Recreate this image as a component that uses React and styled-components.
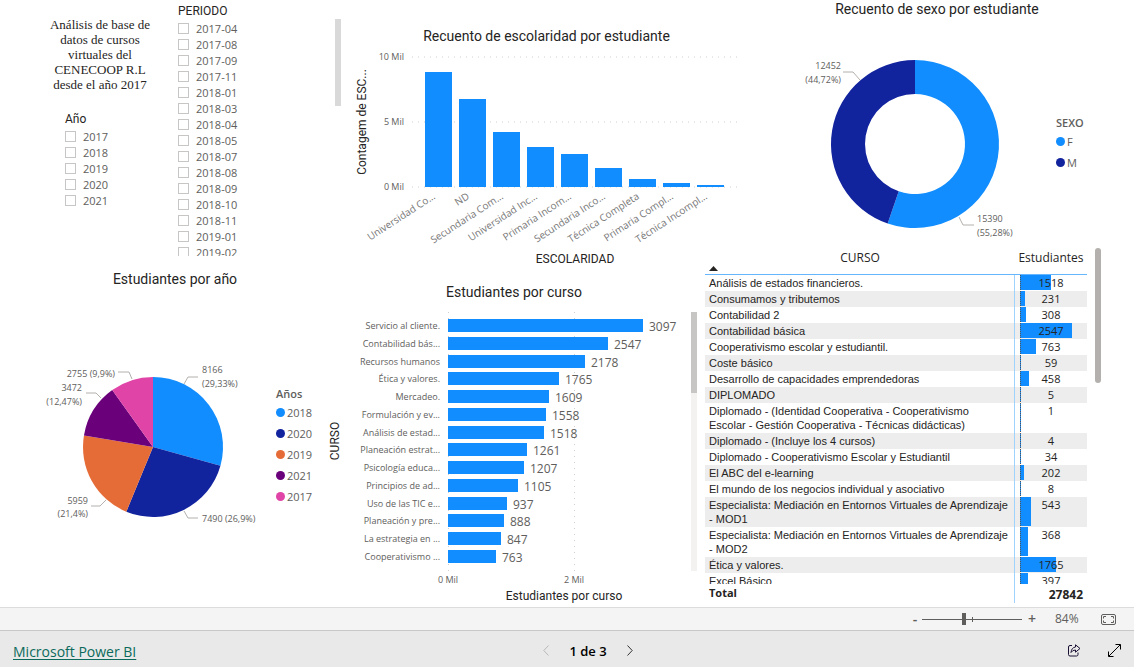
import React, { useState } from 'react'
import styled, { createGlobalStyle } from 'styled-components'

const sans = '"Open Sans", "Noto Sans", sans-serif'
const din = 'Roboto, "Open Sans", sans-serif'

const colors = {
  blue: '#118dff',
  navy: '#12239e',
  orange: '#e66c37',
  purple: '#6b007b',
  pink: '#e044a7',
  text: '#252423',
  muted: '#605e5c'
}

const GlobalStyle = createGlobalStyle`
  * {
    box-sizing: border-box;
  }
  body {
    margin: 0;
    background: #fff;
    color: ${colors.text};
    font-family: ${sans};
    font-size: 11px;
  }
`

const Page = styled.div`
  display: flex;
  flex-direction: column;
  height: 100vh;
`

const Report = styled.main`
  flex: 1;
  min-height: 0;
  display: grid;
  grid-template-columns:
    minmax(0, 325fr) minmax(0, 20fr) minmax(0, 358fr) minmax(0, 37fr)
    minmax(0, 394fr);
  grid-template-rows: minmax(0, 248fr) minmax(0, 20fr) minmax(0, 339fr);
`

const Visual = styled.section`
  grid-column: ${props => props.$col};
  grid-row: ${props => props.$row};
  display: flex;
  flex-direction: column;
  min-height: 0;
  padding: ${props => props.$pad || 0};
`

const VisualTitle = styled.h2`
  margin: 0;
  padding-left: ${props => props.$indent || 0};
  font: 400 14px/18px ${din};
  text-align: center;
`

const ChartRow = styled.div`
  flex: 1;
  min-height: 0;
  display: flex;
  align-items: ${props => props.$align || 'center'};
  gap: ${props => props.$gap};
  padding: ${props => props.$pad};
`

/* filters */

const Filters = styled.section`
  grid-column: 1 / 3;
  grid-row: 1 / 3;
  display: flex;
  min-height: 0;
  padding-bottom: 12px;
`

const Intro = styled.div`
  flex: 0 0 178px;
  padding: 17px 22px 0 44px;
`

const IntroTitle = styled.h1`
  margin: 0 0 19px;
  font: 400 13px/15px "Liberation Serif", serif;
  text-align: center;
  white-space: nowrap;
`

const SlicerBox = styled.div`
  display: flex;
  flex-direction: column;
  flex: 1;
  min-height: 0;
  padding: ${props => props.$pad};
`

const SlicerTitle = styled.h3`
  margin: 0 0 1px;
  font: 400 12px/16px ${din};
`

const SlicerList = styled.ul`
  flex: 1;
  min-height: 0;
  margin: 0;
  padding: 0;
  list-style: none;
  overflow: hidden;
`

const SlicerLabel = styled.label`
  display: flex;
  align-items: center;
  gap: 7px;
  height: 16px;
  color: ${colors.muted};
`

const Tick = styled.input`
  appearance: none;
  width: 11px;
  height: 11px;
  margin: 0;
  border: 1px solid #c8c6c4;
  background: #fff;

  &:checked {
    background: ${colors.muted};
  }
`

const ScrollTrack = styled.div`
  flex: none;
  width: 6px;
  height: ${props => props.$height};
  margin: ${props => props.$margin};
  background: ${props => props.$track || 'transparent'};
`

const ScrollThumb = styled.div`
  height: ${props => props.$height};
  border-radius: ${props => props.$radius || 0};
  background: ${props => props.$color};
`

/* charts */

const Chart = styled.svg`
  display: block;
  flex: none;
  overflow: visible;
  font-family: ${sans};
`

const AxisText = styled.text`
  font-size: ${props => props.$size || '10px'};
  fill: ${props => props.$fill || colors.muted};
`

const AxisTitle = styled.text`
  font: 400 12px ${din};
  fill: ${colors.text};
  text-anchor: middle;
`

const GridLine = styled.line`
  stroke: #d2d0ce;
  stroke-dasharray: 1 5;
`

const Leader = styled.polyline`
  fill: none;
  stroke: #b3b0ad;
`

const LegendList = styled.ul`
  margin: 0;
  padding: 0;
  list-style: none;
  color: ${colors.muted};
`

const LegendTitle = styled.li`
  font-weight: 600;
  line-height: 16px;
`

const LegendItem = styled.li`
  display: flex;
  align-items: center;
  gap: 2px;
  height: 21px;

  &::before {
    content: '';
    width: 9px;
    height: 9px;
    border-radius: 50%;
    background: ${props => props.$color};
  }
`

/* table */

const TableVisual = styled.section`
  grid-column: 4 / 6;
  grid-row: 2 / 4;
  display: flex;
  gap: 8px;
  min-height: 0;
  padding: 0 33px 4px 2px;
`

const TableArea = styled.div`
  flex: 1;
  min-width: 0;
  display: flex;
  flex-direction: column;
`

const TableScroll = styled.div`
  flex: 1;
  min-height: 0;
  overflow: hidden;
`

const CourseTable = styled.table`
  width: 100%;
  table-layout: fixed;
  border-spacing: 0;
  font-family: "Liberation Sans", sans-serif;
  line-height: 14px;

  tbody tr:nth-child(even) {
    background: #ededed;
  }
`

const HeadCell = styled.th`
  position: sticky;
  top: 0;
  z-index: 1;
  width: ${props => props.$width};
  height: 27px;
  padding: 3px 4px 0;
  border-bottom: 1px solid #66b5ff;
  background: #fff;
  font: 400 12px/14px ${sans};
  vertical-align: top;

  & + & {
    padding: 3px 0 0;
  }
`

const SortMark = styled.svg`
  display: block;
  margin-top: 1px;
`

const NameCell = styled.td`
  padding: 1px 4px;
  border-right: 1px solid #a0d1ff;
  white-space: pre-line;
`

const ValueCell = styled.td`
  position: relative;
  padding: 1px 0;
  font-family: ${sans};
  text-align: center;
  vertical-align: top;
`

const DataBar = styled.span`
  position: absolute;
  top: 0;
  bottom: 1px;
  left: 5px;
  border-left: 1px dotted #555;
  background: ${colors.blue};
`

const Value = styled.span`
  position: relative;
`

const TotalRow = styled.tr`
  height: 19px;
  font: 700 12px/15px ${sans};
`

const TotalLabel = styled.th`
  padding: 0 4px 3px;
  border-right: 1px solid #a0d1ff;
  font-size: 11px;
  text-align: left;
`

const TotalValue = styled.td`
  width: 72px;
  padding: 1px 4px 0;
  text-align: right;
`

/* bottom bars */

const ZoomBar = styled.div`
  flex: none;
  display: flex;
  align-items: center;
  justify-content: flex-end;
  height: 24px;
  padding-right: 18px;
  border-top: 1px solid #dcdcdc;
  border-bottom: 1px solid #c8c8c8;
  background: #f4f4f4;
  color: ${colors.muted};
`

const IconButton = styled.button`
  display: flex;
  align-items: center;
  justify-content: center;
  width: ${props => props.$width || '14px'};
  height: 20px;
  padding: 0;
  border: 0;
  background: none;
  color: ${props => props.$color || colors.muted};
  font: 600 14px/20px ${sans};
`

const SliderWrap = styled.div`
  position: relative;
  display: flex;
  margin-right: 3px;

  &::after {
    content: '';
    position: absolute;
    top: 4px;
    left: 50px;
    width: 1px;
    height: 5px;
    background: ${colors.muted};
  }
`

const Slider = styled.input`
  appearance: none;
  width: 100px;
  height: 12px;
  margin: 0;
  background: linear-gradient(${colors.muted}, ${colors.muted}) center / 100% 1px
    no-repeat;

  &::-webkit-slider-thumb {
    appearance: none;
    width: 4px;
    height: 12px;
    background: ${colors.muted};
  }
`

const ZoomValue = styled.output`
  width: 24px;
  margin: 0 22px 0 16px;
  font-size: 12px;
  line-height: 16px;
`

const Footer = styled.footer`
  flex: none;
  display: grid;
  grid-template-columns: 539fr 98px 497fr;
  align-items: center;
  height: 36px;
  background: #e9e9e9;
`

const BrandLink = styled.a`
  justify-self: start;
  margin-left: 13px;
  padding-top: 4px;
  color: #0b6a5b;
  font-size: 14px;
  text-decoration: underline;
  text-underline-offset: 2px;
`

const Pager = styled.nav`
  display: flex;
  align-items: center;
  justify-content: space-between;
  padding-top: 3px;
  color: #000;
  font: 600 13px/20px ${sans};
`

const Actions = styled.div`
  display: flex;
  justify-content: flex-end;
  gap: 26px;
  padding: 3px 13px 0 0;
`

const years = ['2017', '2018', '2019', '2020', '2021']

const periods = [
  '2017-04', '2017-08', '2017-09', '2017-11', '2018-01',
  '2018-03', '2018-04', '2018-05', '2018-07', '2018-08',
  '2018-09', '2018-10', '2018-11', '2019-01', '2019-02'
]

const schooling = [
  ['Universidad Co...', 8880],
  ['ND', 6770],
  ['Secundaria Com...', 4200],
  ['Universidad Inc...', 3080],
  ['Primaria Incom...', 2520],
  ['Secundaria Inco...', 1450],
  ['Técnica Completa', 640],
  ['Primaria Compl...', 330],
  ['Técnica Incompl...', 180]
]

const courseBars = [
  ['Servicio al cliente.', 3097],
  ['Contabilidad bás...', 2547],
  ['Recursos humanos', 2178],
  ['Ética y valores.', 1765],
  ['Mercadeo.', 1609],
  ['Formulación y ev...', 1558],
  ['Análisis de estad...', 1518],
  ['Planeación estrat...', 1261],
  ['Psicología educa...', 1207],
  ['Principios de ad...', 1105],
  ['Uso de las TIC e...', 937],
  ['Planeación y pre...', 888],
  ['La estrategia en ...', 847],
  ['Cooperativismo ...', 763]
]

const courseRows = [
  ['Análisis de estados financieros.', 1518],
  ['Consumamos y tributemos', 231],
  ['Contabilidad 2', 308],
  ['Contabilidad básica', 2547],
  ['Cooperativismo escolar y estudiantil.', 763],
  ['Coste básico', 59],
  ['Desarrollo de capacidades emprendedoras', 458],
  ['DIPLOMADO', 5],
  ['Diplomado - (Identidad Cooperativa - Cooperativismo\nEscolar - Gestión Cooperativa - Técnicas didácticas)', 1],
  ['Diplomado - (Incluye los 4 cursos)', 4],
  ['Diplomado - Cooperativismo Escolar y Estudiantil', 34],
  ['El ABC del e-learning', 202],
  ['El mundo de los negocios individual y asociativo', 8],
  ['Especialista: Mediación en Entornos Virtuales de Aprendizaje\n- MOD1', 543],
  ['Especialista: Mediación en Entornos Virtuales de Aprendizaje\n- MOD2', 368],
  ['Ética y valores.', 1765],
  ['Excel Básico', 397]
]

const sexSlices = [
  { name: 'F', value: 15390, color: colors.blue },
  { name: 'M', value: 12452, color: colors.navy }
]

const yearSlices = [
  { name: '2018', value: 8166, color: colors.blue },
  { name: '2020', value: 7490, color: colors.navy },
  { name: '2019', value: 5959, color: colors.orange },
  { name: '2021', value: 3472, color: colors.purple },
  { name: '2017', value: 2755, color: colors.pink }
]

const point = (angle, r) =>
  `${(Math.sin(angle) * r).toFixed(2)} ${(-Math.cos(angle) * r).toFixed(2)}`

const Slices = ({ data, outer, inner = 0 }) => {
  const total = data.reduce((sum, d) => sum + d.value, 0)
  let start = 0
  return data.map(d => {
    const end = start + (d.value / total) * Math.PI * 2
    const large = end - start > Math.PI ? 1 : 0
    const path = [
      `M${point(start, outer)}`,
      `A${outer} ${outer} 0 ${large} 1 ${point(end, outer)}`,
      `L${point(end, inner)}`,
      inner ? `A${inner} ${inner} 0 ${large} 0 ${point(start, inner)}` : '',
      'Z'
    ].join('')
    start = end
    return <path key={d.name} d={path} fill={d.color} />
  })
}

const Legend = ({ title, data }) => (
  <LegendList>
    <LegendTitle>{title}</LegendTitle>
    {data.map(d => (
      <LegendItem key={d.name} $color={d.color}>{d.name}</LegendItem>
    ))}
  </LegendList>
)

const Slicer = ({ title, items, pad }) => (
  <SlicerBox $pad={pad}>
    <SlicerTitle>{title}</SlicerTitle>
    <SlicerList>
      {items.map(item => (
        <li key={item}>
          <SlicerLabel>
            <Tick type='checkbox' name={title} value={item} />
            {item}
          </SlicerLabel>
        </li>
      ))}
    </SlicerList>
  </SlicerBox>
)

const SchoolingChart = () => (
  <Chart width='395' height='223' viewBox='0 0 395 223'>
    {['10 Mil', '5 Mil', '0 Mil'].map((tick, i) => (
      <g key={tick}>
        <AxisText x='59' y={15 + i * 65} textAnchor='end' $size='9px'>{tick}</AxisText>
        <GridLine x1='67' x2='394' y1={12 + i * 65} y2={12 + i * 65} />
      </g>
    ))}
    {schooling.map(([name, value], i) => {
      const x = 80 + i * 34
      const height = Math.round(value * 0.013)
      return (
        <g key={name}>
          <rect x={x} y={142 - height} width='27' height={height} fill={colors.blue} />
          <AxisText
            $fill='#777'
            textAnchor='end'
            transform={`translate(${x + 11} 153) rotate(-33)`}
          >
            {name}
          </AxisText>
        </g>
      )
    })}
    <AxisTitle transform='translate(21 77) rotate(-90)'>Contagem de ESC...</AxisTitle>
    <AxisTitle x='230' y='218'>ESCOLARIDAD</AxisTitle>
  </Chart>
)

const CourseChart = () => (
  <Chart width='366' height='305' viewBox='0 0 366 305'>
    {[0, 2].map(n => (
      <g key={n}>
        <GridLine x1={123.5 + n * 63} x2={123.5 + n * 63} y1='10' y2='269' />
        <AxisText x={123 + n * 63} y='281' textAnchor='middle' $size='9px'>{n} Mil</AxisText>
      </g>
    ))}
    {courseBars.map(([name, value], i) => {
      const y = 17 + Math.round(i * 17.75)
      const width = Math.round(value * 0.063)
      return (
        <g key={name}>
          <AxisText x='115' y={y + 10} textAnchor='end' $size='9px'>{name}</AxisText>
          <rect x='123' y={y} width={width} height='13' fill={colors.blue} />
          <AxisText x={129 + width} y={y + 12} $size='12px'>{value}</AxisText>
        </g>
      )
    })}
    <AxisTitle transform='translate(14 139) rotate(-90)'>CURSO</AxisTitle>
    <AxisTitle x='239' y='298'>Estudiantes por curso</AxisTitle>
  </Chart>
)

const SexChart = () => (
  <Chart width='225' height='200' viewBox='-117 -100 225 200'>
    <Slices data={sexSlices} outer={84} inner={50} />
    <Leader points='-72,-72 -62,-72 -55,-64' />
    <Leader points='44,73 48,81 59,81' />
    <AxisText x='-74' y='-75' textAnchor='end' $size='9px'>12452</AxisText>
    <AxisText x='-74' y='-61' textAnchor='end' $size='9px'>(44,72%)</AxisText>
    <AxisText x='62' y='78' $size='9px'>15390</AxisText>
    <AxisText x='62' y='92' $size='9px'>(55,28%)</AxisText>
  </Chart>
)

const YearChart = () => (
  <Chart width='226' height='180' viewBox='-116 -90 226 180'>
    <Slices data={yearSlices} outer={70} />
    <Leader points='31,-63 35,-70 45,-70' />
    <Leader points='31,64 35,71 45,71' />
    <Leader points='-62,59 -53,59 -47,53' />
    <Leader points='-67,-54 -57,-54 -52,-49' />
    <Leader points='-35,-75 -24,-75 -21,-68' />
    <AxisText x='49' y='-74' $size='9px'>8166</AxisText>
    <AxisText x='49' y='-60' $size='9px'>(29,33%)</AxisText>
    <AxisText x='49' y='75' $size='9px'>7490 (26,9%)</AxisText>
    <AxisText x='-65' y='57' textAnchor='end' $size='9px'>5959</AxisText>
    <AxisText x='-65' y='70' textAnchor='end' $size='9px'>(21,4%)</AxisText>
    <AxisText x='-71' y='-56' textAnchor='end' $size='9px'>3472</AxisText>
    <AxisText x='-71' y='-42' textAnchor='end' $size='9px'>(12,47%)</AxisText>
    <AxisText x='-38' y='-70' textAnchor='end' $size='9px'>2755 (9,9%)</AxisText>
  </Chart>
)

const CoursesTable = () => (
  <TableVisual>
    <TableArea>
      <TableScroll>
        <CourseTable>
          <thead>
            <tr>
              <HeadCell scope='col' aria-sort='ascending'>
                CURSO
                <SortMark width='9' height='5' viewBox='0 0 9 5'>
                  <path d='M0 5L4.500 0L9 5Z' fill={colors.text} />
                </SortMark>
              </HeadCell>
              <HeadCell scope='col' $width='72px'>Estudiantes</HeadCell>
            </tr>
          </thead>
          <tbody>
            {courseRows.map(([name, value]) => (
              <tr key={name}>
                <NameCell>{name}</NameCell>
                <ValueCell>
                  <DataBar style={{ width: Math.max(1, Math.round(value * 0.0205)) }} />
                  <Value>{value}</Value>
                </ValueCell>
              </tr>
            ))}
          </tbody>
        </CourseTable>
      </TableScroll>
      <CourseTable>
        <tfoot>
          <TotalRow>
            <TotalLabel scope='row'>Total</TotalLabel>
            <TotalValue>27842</TotalValue>
          </TotalRow>
        </tfoot>
      </CourseTable>
    </TableArea>
    <ScrollTrack $height='100%'>
      <ScrollThumb $height='38%' $radius='3px' $color='#b3b0ad' />
    </ScrollTrack>
  </TableVisual>
)

const ZoomControls = () => {
  const [zoom, setZoom] = useState(84)
  return (
    <ZoomBar>
      <IconButton aria-label='Alejar' onClick={() => setZoom(zoom - 10)}>-</IconButton>
      <SliderWrap>
        <Slider
          type='range'
          aria-label='Zoom'
          min='0'
          max='200'
          value={zoom}
          onChange={e => setZoom(Number(e.target.value))}
        />
      </SliderWrap>
      <IconButton aria-label='Acercar' onClick={() => setZoom(zoom + 10)}>+</IconButton>
      <ZoomValue>{zoom}%</ZoomValue>
      <IconButton $width='15px' aria-label='Ajustar a la página'>
        <svg width='15' height='11' viewBox='0 0 15 11' fill='none' stroke='currentColor'>
          <rect x='0.5' y='0.5' width='14' height='10' rx='1.5' />
          <path d='M5 2.500H2.500V4.500M2.500 6.500V8.500H5M10 2.500H12.500V4.500M12.500 6.500V8.500H10' />
        </svg>
      </IconButton>
    </ZoomBar>
  )
}

export default () => (
  <Page>
    <GlobalStyle />
    <Report>
      <Filters>
        <Intro>
          <IntroTitle>
            Análisis de base de<br />
            datos de cursos<br />
            virtuales del<br />
            CENECOOP R.L<br />
            desde el año 2017
          </IntroTitle>
          <Slicer title='Año' items={years} pad='0 0 0 21px' />
        </Intro>
        <Slicer title='PERIODO' items={periods} pad='3px 0 0' />
        <ScrollTrack $height='235px' $margin='19px 4px 0 0'>
          <ScrollThumb $height='87px' $color='#d9d9d9' />
        </ScrollTrack>
      </Filters>
      <Visual $col='3 / 5' $row='1 / 3' $pad='27px 0 0'>
        <VisualTitle $indent='8px'>Recuento de escolaridad por estudiante</VisualTitle>
        <SchoolingChart />
      </Visual>
      <Visual $col='5' $row='1'>
        <VisualTitle>Recuento de sexo por estudiante</VisualTitle>
        <ChartRow $gap='33px' $pad='21px 0 0 58px'>
          <SexChart />
          <Legend title='SEXO' data={sexSlices} />
        </ChartRow>
      </Visual>
      <Visual $col='1' $row='3' $pad='2px 0 0'>
        <VisualTitle $indent='25px'>Estudiantes por año</VisualTitle>
        <ChartRow $gap='13px' $pad='0 0 2px 37px'>
          <YearChart />
          <Legend title='Años' data={yearSlices} />
        </ChartRow>
      </Visual>
      <Visual $col='2 / 4' $row='3' $pad='15px 0 0'>
        <VisualTitle>Estudiantes por curso</VisualTitle>
        <ChartRow $align='flex-start' $pad='1px 0 0'>
          <CourseChart />
          <ScrollTrack $height='259px' $margin='10px 0 0' $track='#f3f2f1'>
            <ScrollThumb $height='81px' $color='#c8c6c4' />
          </ScrollTrack>
        </ChartRow>
      </Visual>
      <CoursesTable />
    </Report>
    <ZoomControls />
    <Footer>
      <BrandLink href='#powerbi'>Microsoft Power BI</BrandLink>
      <Pager aria-label='Páginas'>
        <IconButton $color='#b8b8b8' aria-label='Página anterior' disabled>
          <svg width='6' height='11' viewBox='0 0 6 11' fill='none' stroke='currentColor'>
            <path d='M5.500 0.500L0.800 5.500L5.500 10.500' />
          </svg>
        </IconButton>
        <span>1 de 3</span>
        <IconButton $color='#333' aria-label='Página siguiente'>
          <svg width='6' height='11' viewBox='0 0 6 11' fill='none' stroke='currentColor'>
            <path d='M0.500 0.500L5.200 5.500L0.500 10.500' />
          </svg>
        </IconButton>
      </Pager>
      <Actions>
        <IconButton $color='#1b1033' aria-label='Compartir'>
          <svg width='14' height='13' viewBox='0 0 14 13' fill='none' stroke='currentColor'>
            <path d='M5 1.500H3Q1.500 1.500 1.500 3V10.500Q1.500 12 3 12H9.500Q11 12 11 10.500V8.500' />
            <path d='M8.500 0.800L13 4.500L8.500 8.200V6Q5.500 6 4 8.500Q4.500 3.500 8.500 3Z' />
          </svg>
        </IconButton>
        <IconButton $color='#000' aria-label='Pantalla completa'>
          <svg width='13' height='13' viewBox='0 0 13 13' fill='none' stroke='currentColor'>
            <path d='M0.800 12.200L12.200 0.800M7.500 0.500H12.500V5.500M0.500 7.500V12.500H5.500' />
          </svg>
        </IconButton>
      </Actions>
    </Footer>
  </Page>
)
